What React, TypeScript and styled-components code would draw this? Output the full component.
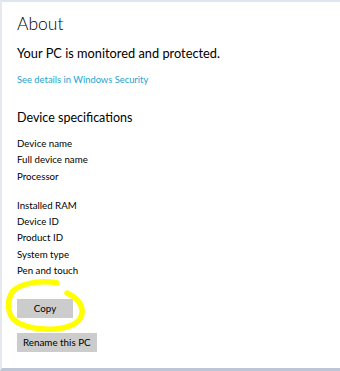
import React from 'react'
import styled, { createGlobalStyle } from 'styled-components'

const GlobalStyle = createGlobalStyle`
  html, body {
    margin: 0;
    padding: 0;
    background: #fff;
  }
  body {
    font-family: Lato, 'Open Sans', sans-serif;
    color: #000;
  }
`

const specs = ['Device name', 'Full device name', 'Processor']
const specsMore = ['Installed RAM', 'Device ID', 'Product ID', 'System type', 'Pen and touch']

const App = () => {
  return (
    <>
      <GlobalStyle />
      <Window>
        <ScrollThumb />
        <Content>
          <Title>About</Title>
          <Status>Your PC is monitored and protected.</Status>
          <Link href='#'>See details in Windows Security</Link>
          <Section>Device specifications</Section>
          <SpecList gap={7}>
            {specs.map((s) => (
              <SpecItem key={s}>{s}</SpecItem>
            ))}
          </SpecList>
          <SpecList gap={13}>
            {specsMore.map((s) => (
              <SpecItem key={s}>{s}</SpecItem>
            ))}
          </SpecList>
          <Buttons>
            <CopyWrap>
              <Button>Copy</Button>
              {/* yellow marker scribble round the Copy button */}
              <Highlight viewBox='0 0 82 54' width='82' height='54'>
                <path
                  d='M52 4 C36 1 16 4 8 12 C2 20 2 32 8 40 C16 48 34 51 50 50 C64 49 76 44 77 34 C78 26 72 19 62 14'
                  fill='none'
                  stroke='#ffff00'
                  strokeWidth='5.5'
                  strokeLinecap='round'
                />
              </Highlight>
            </CopyWrap>
            <Button>Rename this PC</Button>
          </Buttons>
        </Content>
      </Window>
    </>
  )
}

export default App

const Window = styled.div`
  position: relative;
  width: 340px;
  height: 371px;
  box-sizing: border-box;
  border-top: 2px solid #dfe5ee;
  border-left: 2px solid #e6e9ee;
  border-bottom: 3px solid #bcc6d6;
  background: #fff;
  overflow: hidden;
`

const ScrollThumb = styled.div`
  position: absolute;
  left: -2px;
  top: 105px;
  width: 2px;
  height: 92px;
  background: #c8cbd1;
`

const Content = styled.div`
  display: flex;
  flex-direction: column;
  align-items: flex-start;
  padding: 9px 0 0 15px;
`

const Title = styled.h1`
  margin: 0;
  font-size: 17.5px;
  font-weight: 300;
  line-height: 26px;
  color: #000;
`

const Status = styled.div`
  margin-top: 6px;
  font-size: 12.8px;
  line-height: 20px;
  color: #000;
`

const Link = styled.a`
  margin-top: 10px;
  font-size: 9.4px;
  line-height: 14px;
  color: #1fa3d0;
  text-decoration: none;
`

const Section = styled.h2`
  margin: 21px 0 0;
  font-size: 12.5px;
  font-weight: 400;
  line-height: 20px;
  color: #000;
`

const SpecList = styled.div<{ gap: number }>`
  display: flex;
  flex-direction: column;
  margin-top: ${({ gap }) => gap}px;
`

const SpecItem = styled.div`
  font-size: 9.7px;
  line-height: 16.3px;
  color: #000;
`

const Buttons = styled.div`
  display: flex;
  flex-direction: column;
  align-items: flex-start;
  gap: 15px;
  margin-top: 18px;
`

const CopyWrap = styled.div`
  position: relative;
`

const Button = styled.button`
  font-family: Lato, 'Open Sans', sans-serif;
  font-size: 9.8px;
  color: #000;
  background: #cccccc;
  border: none;
  border-radius: 0;
  height: 19px;
  padding: 0 6px;
  min-width: 56px;
`

const Highlight = styled.svg`
  position: absolute;
  left: -12px;
  top: -17px;
  pointer-events: none;
`
